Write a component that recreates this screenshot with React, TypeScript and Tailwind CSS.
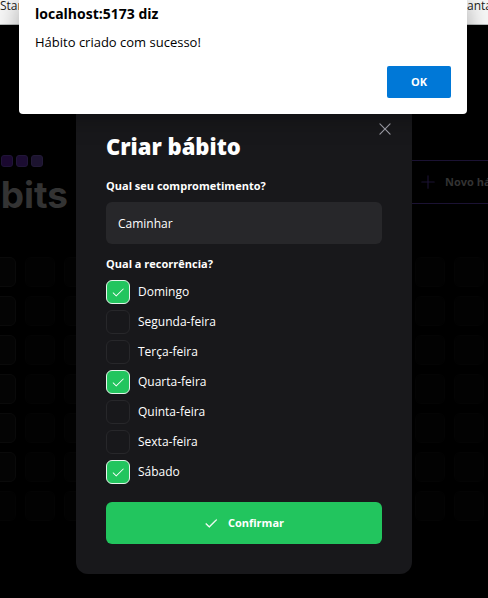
import { useState } from "react";
import { PiCheck, PiPlus, PiX } from "react-icons/pi";

const weekDays = [
  "Domingo",
  "Segunda-feira",
  "Terça-feira",
  "Quarta-feira",
  "Quinta-feira",
  "Sexta-feira",
  "Sábado",
];

const COLUMNS = 13;

function BookmarksBar() {
  return (
    <div className="flex h-[25px] justify-between overflow-hidden border-b border-[#b8bcbc] bg-[#f7f7f7] text-xs leading-3 text-[#222222]">
      <span>Start</span>
      <span className="-mr-1">Santa</span>
    </div>
  );
}

function Header() {
  return (
    <header className="flex items-start justify-between">
      <div className="flex w-[68px] flex-col">
        <div className="flex gap-[3px] pl-px">
          <span className="size-3 rounded-[3px] border border-[#1f1437] bg-[#1a082f]" />
          <span className="size-3 rounded-[3px] border border-[#211638] bg-[#1b0c31]" />
          <span className="size-3 rounded-[3px] border border-[#221a36] bg-[#1c132f]" />
        </div>
        <div className="flex justify-end overflow-hidden font-['Inter',sans-serif] text-[37px] leading-[56px] font-bold text-[#333333]">
          habits
        </div>
      </div>
      <button
        type="button"
        className="mt-[5px] -mr-14 flex h-11 w-[140px] shrink-0 items-center gap-2 rounded-lg border border-[#1b1233] pl-3.5 text-[11px] font-bold whitespace-nowrap text-[#333333]"
      >
        <PiPlus className="size-[18px] text-[#1b1233]" />
        Novo hábito
      </button>
    </header>
  );
}

function SummaryGrid() {
  return (
    <div className="mt-[34px] -ml-3.5 grid w-max grid-flow-col grid-rows-7 gap-[9px]">
      {Array.from({ length: COLUMNS * 7 }, (_, i) => (
        <div
          key={i}
          className={
            i < 6
              ? "size-[30px] rounded-md border border-[#0a0a0a] bg-[#040404]"
              : "size-[30px] rounded-md border border-[#040404] bg-[#020202]"
          }
        />
      ))}
    </div>
  );
}

function NewHabitModal() {
  const [title, setTitle] = useState("Caminhar");
  const [selected, setSelected] = useState([0, 3, 6]);

  function toggle(day: number) {
    setSelected((days) =>
      days.includes(day) ? days.filter((d) => d !== day) : [...days, day],
    );
  }

  return (
    <div className="relative w-full max-w-[336px] rounded-xl bg-[#18181b] p-[30px]">
      <button
        type="button"
        aria-label="Fechar"
        className="absolute top-4 right-[18px] text-[#a1a1aa]"
      >
        <PiX className="size-[18px]" />
      </button>
      <h2 className="text-[22px] leading-6 font-extrabold">Criar bábito</h2>
      <form className="mt-5 flex flex-col" onSubmit={(e) => e.preventDefault()}>
        <label htmlFor="title" className="text-[11px] leading-4 font-bold">
          Qual seu comprometimento?
        </label>
        <input
          id="title"
          type="text"
          value={title}
          onChange={(e) => setTitle(e.target.value)}
          className="mt-2 h-[42px] rounded-md bg-[#27272a] px-3 text-xs outline-none"
        />
        <fieldset className="mt-3">
          <legend className="text-[11px] leading-4 font-bold">
            Qual a recorrência?
          </legend>
          <div className="mt-2 flex flex-col gap-1.5">
            {weekDays.map((day, i) => (
              <label key={day} className="flex items-center gap-2 text-xs">
                <span className="grid size-6">
                  <input
                    type="checkbox"
                    checked={selected.includes(i)}
                    onChange={() => toggle(i)}
                    className="peer col-start-1 row-start-1 size-6 appearance-none rounded-md border border-[#27272a] checked:border-[#e4f5ea] checked:bg-[#22c55e]"
                  />
                  <PiCheck className="pointer-events-none invisible col-start-1 row-start-1 size-3.5 place-self-center text-white peer-checked:visible" />
                </span>
                {day}
              </label>
            ))}
          </div>
        </fieldset>
        <button
          type="submit"
          className="mt-[18px] flex h-[42px] items-center justify-center gap-2.5 rounded-md bg-[#22c55e] text-[11px] font-bold"
        >
          <PiCheck className="size-3.5" strokeWidth={10} stroke="currentColor" />
          Confirmar
        </button>
      </form>
    </div>
  );
}

function AlertDialog() {
  return (
    <div
      role="alertdialog"
      aria-labelledby="alert-title"
      className="flex w-full max-w-[448px] flex-col rounded-b bg-white px-4 pb-4 text-black shadow-[0_4px_24px_rgba(0,0,0,0.35)]"
    >
      <h1 id="alert-title" className="pt-1 text-sm leading-5 font-bold">
        localhost:5173 diz
      </h1>
      <p className="mt-2 text-[13px] leading-5">Hábito criado com sucesso!</p>
      <button
        type="button"
        className="mt-3.5 h-8 w-16 self-end rounded-xs bg-[#0078d7] text-[11px] font-bold text-white"
      >
        OK
      </button>
    </div>
  );
}

export default function App() {
  return (
    <div className="relative min-h-screen overflow-hidden bg-black font-['Open_Sans','Noto_Sans',sans-serif] text-white">
      <BookmarksBar />
      <main className="pt-[130px]">
        <Header />
        <SummaryGrid />
      </main>
      <div className="absolute inset-x-0 top-[104px] flex justify-center">
        <NewHabitModal />
      </div>
      <div className="absolute inset-x-0 top-0 flex justify-center pr-0.5">
        <AlertDialog />
      </div>
    </div>
  );
}
